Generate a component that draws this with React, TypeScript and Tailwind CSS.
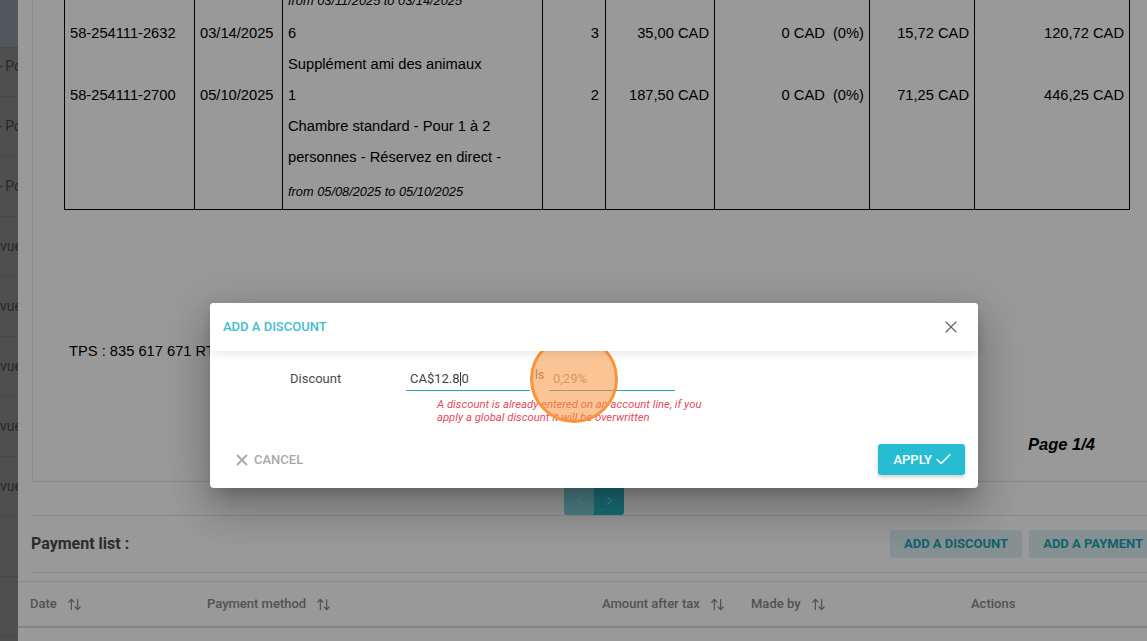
import { X, Check, ChevronLeft, ChevronRight, ArrowUpDown } from "lucide-react"

const sideRows = ["Standard - Po", "Standard - Po", "Standard - Po", "Aperçu vue", "Aperçu vue", "Aperçu vue", "Aperçu vue", "Aperçu vue", "", ""]

type Line = { ref: string; date: string; desc: string[]; period?: string; qty: string; price: string; disc: string; tax: string; total: string }

const lines: Line[] = [
    {
        ref: "58-254111-2631",
        date: "03/11/2025",
        desc: ["3", "Chambre standard - Pour 1 à 2", "personnes - Réservez en direct -"],
        period: "from 03/11/2025 to 03/14/2025",
        qty: "3",
        price: "115,00 CAD",
        disc: "0 CAD  (0%)",
        tax: "51,75 CAD",
        total: "396,75 CAD",
    },
    {
        ref: "58-254111-2632",
        date: "03/14/2025",
        desc: ["6", "Supplément ami des animaux"],
        qty: "3",
        price: "35,00 CAD",
        disc: "0 CAD  (0%)",
        tax: "15,72 CAD",
        total: "120,72 CAD",
    },
    {
        ref: "58-254111-2700",
        date: "05/10/2025",
        desc: ["1", "Chambre standard - Pour 1 à 2", "personnes - Réservez en direct -"],
        period: "from 05/08/2025 to 05/10/2025",
        qty: "2",
        price: "187,50 CAD",
        disc: "0 CAD  (0%)",
        tax: "71,25 CAD",
        total: "446,25 CAD",
    },
]

function SortHead({ label, className }: { label: string; className: string }) {
    return (
        <div className={`flex items-center gap-[10px] pl-[12px] ${className}`}>
            <span>{label}</span>
            <ArrowUpDown className="h-[15px] w-[15px]" strokeWidth={2} />
        </div>
    )
}

export default function App() {
    return (
        <div className="relative h-[641px] w-full overflow-hidden bg-white font-['Roboto',sans-serif]">
            <div className="flex h-full">
                {/* sidebar, mostly hidden behind the drawer */}
                <aside className="w-[18px] shrink-0 overflow-hidden bg-[#848484] text-[14px] text-[#444]">
                    <div className="h-[48px] border-b border-[#7a7a7a] bg-[#85939b]" />
                    {sideRows.map((t, i) => (
                        <div
                            key={i}
                            className={`flex justify-end overflow-hidden border-b border-[#787878] ${i === 0 ? "h-[49px] items-center pb-[12px]" : "h-[60px] items-center"}`}
                        >
                            <span className="mr-[-4px] whitespace-nowrap">{t}</span>
                        </div>
                    ))}
                </aside>

                <main className="w-[1152px] shrink-0 bg-white">
                    {/* invoice preview */}
                    <div className="mx-[14px] mt-[-133px] border border-[#e4e4e4] bg-white pb-[27px] pl-[31px] pr-[60px] pt-[20px] font-['Liberation_Sans',Arial,sans-serif] text-[14.7px] text-black">
                        <table className="w-[1065px] table-fixed border-collapse border border-black">
                            <colgroup>
                                <col className="w-[130px]" />
                                <col className="w-[88px]" />
                                <col className="w-[260px]" />
                                <col className="w-[63px]" />
                                <col className="w-[109px]" />
                                <col className="w-[155px]" />
                                <col className="w-[105px]" />
                                <col className="w-[155px]" />
                            </colgroup>
                            <tbody>
                                {lines.map((l) => (
                                    <tr key={l.ref} className="align-top leading-[31px]">
                                        <td className="border-x border-black px-[5px]">{l.ref}</td>
                                        <td className="border-x border-black px-[5px]">{l.date}</td>
                                        <td className="border-x border-black px-[5px]">
                                            {l.desc.map((d, i) => (
                                                <div key={i} className="whitespace-nowrap">{d}</div>
                                            ))}
                                            {l.period && <div className="pb-[2px] pt-[3px] text-[12.8px] italic">{l.period}</div>}
                                        </td>
                                        <td className="border-x border-black px-[6px] text-right">{l.qty}</td>
                                        <td className="border-x border-black px-[5px] text-right">{l.price}</td>
                                        <td className="whitespace-pre border-x border-black px-[5px] text-right">{l.disc}</td>
                                        <td className="border-x border-black px-[5px] text-right">{l.tax}</td>
                                        <td className="border-x border-black px-[5px] text-right">{l.total}</td>
                                    </tr>
                                ))}
                            </tbody>
                        </table>
                        <p className="mt-[133px] pl-[5px] leading-[17px]">TPS : 835 617 671 RT0001</p>
                        <p className="mt-[75px] text-right text-[16.5px] font-bold italic leading-[19px]">Page 1/4</p>
                    </div>

                    {/* pager */}
                    <div className="mx-[13px] flex justify-center border-b border-[#e6e6e6] pt-[3px]">
                        <button className="flex h-[30px] w-[30px] items-center justify-center rounded-bl-[3px] bg-[#2bb7c8]/60 text-white/50">
                            <ChevronLeft size={15} strokeWidth={1.5} />
                        </button>
                        <button className="flex h-[30px] w-[30px] items-center justify-center rounded-br-[3px] bg-[#2bb7c8] text-[#cdeff3]">
                            <ChevronRight size={15} strokeWidth={1.5} />
                        </button>
                    </div>

                    <div className="mx-[13px] flex h-[57px] items-center justify-between border-b border-[#e6e6e6]">
                        <h3 className="text-[16px] font-bold text-[#4a4a4a]">Payment list :</h3>
                        <div className="flex gap-[7px]">
                            <button className="h-[28px] rounded-[3px] bg-[#ddf0f2] px-[14px] text-[13px] font-bold uppercase text-[#1ca3b6]">Add a discount</button>
                            <button className="h-[28px] rounded-[3px] bg-[#ddf0f2] px-[14px] text-[13px] font-bold uppercase text-[#1ca3b6]">Add a payment</button>
                        </div>
                    </div>

                    <div className="mt-[8px] flex h-[47px] items-center border-b-2 border-t border-b-[#dcdcdc] border-t-[#e6e6e6] text-[13px] font-medium text-[#8a8a8a]">
                        <SortHead label="Date" className="w-[177px]" />
                        <SortHead label="Payment method" className="w-[395px]" />
                        <SortHead label="Amount after tax" className="w-[149px]" />
                        <SortHead label="Made by" className="w-[220px]" />
                        <div className="pl-[12px]">Actions</div>
                    </div>
                </main>
            </div>

            <div className="absolute inset-0 bg-black/40" />

            {/* dialog */}
            <div className="absolute left-[210px] top-[303px] w-[768px] rounded-[4px] bg-white shadow-[0_11px_15px_-7px_rgba(0,0,0,0.2),0_24px_38px_3px_rgba(0,0,0,0.14),0_9px_46px_8px_rgba(0,0,0,0.12)]">
                <div className="relative z-10 flex h-[48px] items-center justify-between rounded-t-[4px] bg-white pl-[13px] pr-[17px] shadow-[0_3px_8px_rgba(0,0,0,0.09)]">
                    <h2 className="text-[13px] font-medium uppercase text-[#3fbcd0]">Add a discount</h2>
                    <X size={20} strokeWidth={1.5} className="text-[#666]" />
                </div>

                <div className="px-[13px] pt-[16px]">
                    <div className="flex items-end text-[13px]">
                        <label className="flex h-[24px] w-[183px] items-center pl-[67px] text-[#4a4a4a]">Discount</label>
                        <div className="flex h-[24px] w-[124px] items-center border-b border-[#2aa3b6] pl-[4px] text-[#444]">
                            CA$12.8<span className="mx-[0.5px] inline-block h-[14px] w-px bg-[#333]" />0
                        </div>
                        <span className="w-[19px] pb-[9px] pl-[5px] text-[12px] leading-[14px] text-[#777]">ls</span>
                        <div className="flex h-[24px] w-[126px] items-center border-b border-[#2aa3b6] pl-[4px] text-[#9e9e9e]">0,29%</div>
                    </div>
                    <p className="ml-[214px] mt-[7px] text-[11.3px] italic leading-[13px] text-[#e34a5d]">
                        A discount is already entered on an account line, if you
                        <br />
                        apply a global discount it will be overwritten
                    </p>
                </div>

                <div className="flex items-center justify-between px-[13px] pb-[13px] pt-[20px]">
                    <button className="flex h-[31px] items-center gap-[3px] pl-[10px] pr-[14px] text-[13px] font-medium uppercase text-[#a8a8a8]">
                        <X size={18} strokeWidth={2.4} />
                        Cancel
                    </button>
                    <button className="flex h-[31px] items-center gap-[2px] rounded-[3px] bg-[#26bdd3] pl-[15px] pr-[12px] text-[13px] font-medium uppercase text-white shadow-[0_2px_4px_rgba(0,0,0,0.2)]">
                        Apply
                        <Check size={19} strokeWidth={2} />
                    </button>
                </div>

                {/* click marker */}
                <div className="absolute left-[320px] top-[32px] h-[88px] w-[88px] rounded-full border-[3px] border-[#f7943c] bg-[#f7943c]/55" />
            </div>
        </div>
    )
}
